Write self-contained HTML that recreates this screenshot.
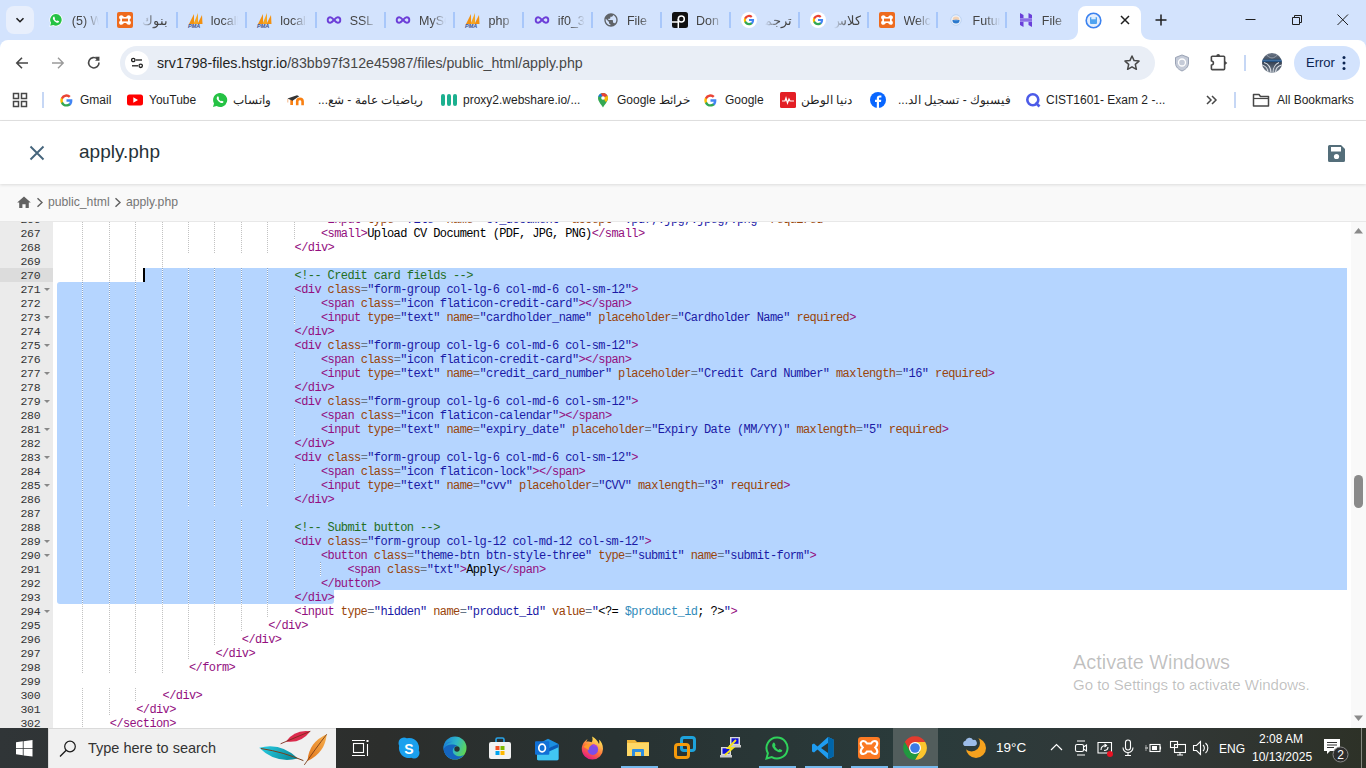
<!DOCTYPE html>
<html><head><meta charset="utf-8"><title>apply.php</title>
<style>
*{margin:0;padding:0;box-sizing:border-box}
html,body{width:1366px;height:768px;overflow:hidden;background:#fff;font-family:"Liberation Sans",sans-serif;position:relative}
.abs{position:absolute}
/* tab strip */
#tabs{position:absolute;left:0;top:0;width:1366px;height:50px;background:#d3e3fd}
#toolbar{position:absolute;left:0;top:40px;width:1366px;height:40px;background:#fff;border-radius:8px 8px 0 0}
#omni{position:absolute;left:120px;top:46px;width:1035px;height:34px;border-radius:17px;background:#e9eef6}
#bm{position:absolute;left:0;top:80px;width:1366px;height:40px;background:#fff}
#sep{position:absolute;left:0;top:120px;width:1366px;height:1px;background:#e3e3e3}
/* page */
#hdr{position:absolute;left:0;top:121px;width:1366px;height:63px;background:#fff;box-shadow:0 1px 3px rgba(0,0,0,.12);z-index:2}
#crumb{position:absolute;left:0;top:184px;width:1366px;height:38px;background:#f9f9f9;border-bottom:1px solid #e8e8e8}
#ed{position:absolute;left:0;top:222px;width:1366px;height:506px;background:#fff;overflow:hidden}
.gut{position:absolute;left:0;top:0;width:53px;height:100%;background:#ebebeb}
.gal{position:absolute;left:0;width:53px;height:14px;background:#dcdcdc}
.ln{position:absolute;left:0;width:40.3px;margin-top:0.6px;text-align:right;font:11.5px/14px "Liberation Mono",monospace;letter-spacing:-0.3px;color:#333}
.fw{position:absolute;left:44px;width:0;height:0;border-left:3px solid transparent;border-right:3px solid transparent;border-top:3px solid #888}
.sel{position:absolute;background:#b5d5ff}
.ig{position:absolute;width:1px;background:repeating-linear-gradient(to bottom,rgba(0,0,0,.24) 0 1px,#fff 1px 2px)}
.cl{position:absolute;margin-top:1px;white-space:pre;font:12px/14px "Liberation Mono",monospace;letter-spacing:-0.6px;color:#000}
.cur{position:absolute;width:2px;height:14px;background:#000}
#sb{position:absolute;left:1351px;top:222px;width:15px;height:506px;background:#f9f9f9}
#taskbar{position:absolute;left:0;top:728px;width:1366px;height:40px;background:linear-gradient(to right,#303537 0%,#2c2e2c 28%,#283232 45%,#2a3b3b 68%,#323838 84%,#2d3127 100%)}
#search{position:absolute;left:48px;top:728px;width:288px;height:40px;background:#f0f0f0;border-top:1px solid #dadada;border-left:1px solid #dadada}
.cont{position:absolute;left:53px;top:0;width:1294px;height:100%;overflow:hidden}
.ttl{position:absolute;top:13px;width:27px;height:16px;font-size:12.5px;line-height:16px;color:#444;white-space:nowrap;overflow:hidden;-webkit-mask-image:linear-gradient(to right,#000 45%,transparent 100%)}
.ttl.rtl{direction:rtl;text-align:right;-webkit-mask-image:linear-gradient(to left,#000 45%,transparent 100%)}
.tsep{position:absolute;top:12px;width:2px;height:16px;background:#a8c7fa}
.url{font-size:14.2px;line-height:18px;white-space:nowrap;letter-spacing:0}
.bmt{position:absolute;top:92px;font-size:12px;line-height:16px;color:#1f1f1f;white-space:nowrap}
.crumbt{position:absolute;top:193.5px;font-size:12.2px;line-height:16px;color:#757575;white-space:nowrap}
.tray{position:absolute;color:#fff;line-height:16px;white-space:nowrap}

</style></head><body>
<div id="tabs">
<div class="abs" style="left:6px;top:6px;width:28px;height:28px;border-radius:8px;background:#e8effc"></div>
<svg class="abs" style="left:14px;top:14px" width="12" height="12" viewBox="0 0 12 12"><path d="M2.5 4.2 L6 7.7 L9.5 4.2" fill="none" stroke="#1f1f1f" stroke-width="1.6"/></svg>
<div class="abs" style="left:48px;top:12px;width:18px;height:16px"><svg width="16" height="16" viewBox="0 0 16 16"><path d="M8 1.2a6.6 6.6 0 0 0-5.7 9.9L1.3 14.7l3.7-1A6.6 6.6 0 1 0 8 1.2z" fill="#fff"/><path d="M8 2a5.8 5.8 0 0 0-5 8.8l-.8 3 3.1-.8A5.8 5.8 0 1 0 8 2z" fill="#25c244"/><path d="M5.6 4.8c.3-.3.7-.2.8.1l.6 1.3c.1.3-.2.6-.4.8.4.9 1.2 1.7 2.2 2.1.2-.2.5-.6.8-.5l1.3.6c.3.1.3.5.1.8-.7.9-1.6.9-2.7.4A6.4 6.4 0 0 1 5.200 7.600c-.5-1.1-.4-2.100.4-2.800z" fill="#fff"/></svg></div>
<div class="ttl" style="left:71.8px">(5) WhatsApp</div>
<div class="tsep" style="left:106px"></div>
<div class="abs" style="left:117px;top:12px;width:18px;height:16px"><svg width="16" height="16" viewBox="0 0 16 16"><rect x="0" y="0" width="16" height="16" rx="2" fill="#ee6b1e"/><path d="M4.300 3.200c1.200 0 2 .8 2.500 1.700h2.400c.5-.9 1.300-1.700 2.500-1.700 1.400 0 2.200 1 2.200 2.100 0 1-.7 1.800-1.500 2.700.8.900 1.500 1.700 1.500 2.700 0 1.100-.8 2.100-2.200 2.100-1.200 0-2-.8-2.500-1.700H6.800c-.5.900-1.300 1.700-2.500 1.700-1.400 0-2.200-1-2.200-2.100 0-1 .7-1.800 1.500-2.700C2.800 7.100 2.100 6.300 2.100 5.300c0-1.100.8-2.100 2.200-2.100z" fill="#fff"/><path d="M5 6.600 H11 V9.400 H5z" fill="#ee6b1e"/></svg></div>
<div class="ttl rtl" style="left:141.3px">بنوك</div>
<div class="tsep" style="left:176px"></div>
<div class="abs" style="left:187px;top:12px;width:18px;height:16px"><svg width="18" height="16" viewBox="0 0 18 16"><path d="M2 12 L7 2 L7 12z" fill="#f29111"/><path d="M6.5 12 L11 1 L11 12z" fill="#f5a623"/><path d="M10.5 12 L15 3 L15.500 12z" fill="#f29111"/><text x="1" y="15.5" font-family="Liberation Sans" font-size="5.5" font-weight="bold" font-style="italic" fill="#3b4f8c">PMA</text></svg></div>
<div class="ttl" style="left:210.8px">localhost</div>
<div class="tsep" style="left:245px"></div>
<div class="abs" style="left:256px;top:12px;width:18px;height:16px"><svg width="18" height="16" viewBox="0 0 18 16"><path d="M2 12 L7 2 L7 12z" fill="#f29111"/><path d="M6.5 12 L11 1 L11 12z" fill="#f5a623"/><path d="M10.5 12 L15 3 L15.500 12z" fill="#f29111"/><text x="1" y="15.5" font-family="Liberation Sans" font-size="5.5" font-weight="bold" font-style="italic" fill="#3b4f8c">PMA</text></svg></div>
<div class="ttl" style="left:280.2px">localhost</div>
<div class="tsep" style="left:315px"></div>
<div class="abs" style="left:326px;top:12px;width:18px;height:16px"><svg width="16" height="16" viewBox="0 0 16 16"><path d="M4.300 5.200c-1.500 0-2.600 1.200-2.600 2.800s1.100 2.800 2.600 2.800c2.300 0 5.100-5.600 7.400-5.600 1.500 0 2.600 1.200 2.600 2.800s-1.100 2.800-2.600 2.800c-2.300 0-5.100-5.600-7.400-5.600z" fill="none" stroke="#6d3fd8" stroke-width="1.9"/></svg></div>
<div class="ttl" style="left:349.7px">SSL</div>
<div class="tsep" style="left:384px"></div>
<div class="abs" style="left:395px;top:12px;width:18px;height:16px"><svg width="16" height="16" viewBox="0 0 16 16"><path d="M4.300 5.200c-1.500 0-2.600 1.200-2.600 2.800s1.100 2.800 2.600 2.800c2.300 0 5.100-5.600 7.400-5.600 1.500 0 2.600 1.200 2.600 2.800s-1.100 2.800-2.600 2.800c-2.300 0-5.100-5.600-7.400-5.600z" fill="none" stroke="#6d3fd8" stroke-width="1.9"/></svg></div>
<div class="ttl" style="left:419.1px">MySQL</div>
<div class="tsep" style="left:453px"></div>
<div class="abs" style="left:464px;top:12px;width:18px;height:16px"><svg width="18" height="16" viewBox="0 0 18 16"><path d="M2 12 L7 2 L7 12z" fill="#f29111"/><path d="M6.5 12 L11 1 L11 12z" fill="#f5a623"/><path d="M10.5 12 L15 3 L15.500 12z" fill="#f29111"/><text x="1" y="15.5" font-family="Liberation Sans" font-size="5.5" font-weight="bold" font-style="italic" fill="#3b4f8c">PMA</text></svg></div>
<div class="ttl" style="left:488.6px">php</div>
<div class="tsep" style="left:522px"></div>
<div class="abs" style="left:534px;top:12px;width:18px;height:16px"><svg width="16" height="16" viewBox="0 0 16 16"><path d="M4.300 5.200c-1.500 0-2.600 1.200-2.600 2.800s1.100 2.800 2.600 2.800c2.300 0 5.100-5.600 7.400-5.600 1.500 0 2.600 1.200 2.600 2.800s-1.100 2.800-2.600 2.800c-2.300 0-5.100-5.600-7.400-5.600z" fill="none" stroke="#6d3fd8" stroke-width="1.9"/></svg></div>
<div class="ttl" style="left:557.7px">if0_39</div>
<div class="tsep" style="left:591px"></div>
<div class="abs" style="left:603px;top:12px;width:18px;height:16px"><svg width="16" height="16" viewBox="0 0 24 24"><path d="M12 2C6.480 2 2 6.480 2 12s4.480 10 10 10 10-4.480 10-10S17.520 2 12 2zm-1 17.930c-3.950-.490-7-3.850-7-7.930 0-.620.080-1.210.210-1.790L9 15v1c0 1.100.900 2 2 2v1.930zm6.900-2.540c-.260-.810-1-1.390-1.900-1.390h-1v-3c0-.550-.450-1-1-1H8v-2h2c.550 0 1-.450 1-1V7h2c1.100 0 2-.900 2-2v-.410c2.930 1.190 5 4.060 5 7.410 0 2.080-.800 3.970-2.100 5.390z" fill="#5f6368"/></svg></div>
<div class="ttl" style="left:626.9px">File</div>
<div class="tsep" style="left:660px"></div>
<div class="abs" style="left:672px;top:12px;width:18px;height:16px"><svg width="16" height="16" viewBox="0 0 16 16"><rect width="16" height="16" rx="2.500" fill="#111"/><circle cx="9.300" cy="7" r="3" fill="none" stroke="#fff" stroke-width="1.500"/><path d="M0 10 H6.300 M6.300 7 V16" stroke="#fff" stroke-width="1.500" fill="none"/></svg></div>
<div class="ttl" style="left:696.0px">Don</div>
<div class="tsep" style="left:729px"></div>
<div class="abs" style="left:741px;top:12px;width:18px;height:16px"><svg width="16" height="16" viewBox="0 0 16 16"><circle cx="8" cy="8" r="8" fill="#fff"/><path d="M13.100 8.100c0-.4 0-.8-.1-1.100H8v2.100h2.900a2.500 2.500 0 0 1-1.100 1.600v1.400h1.700c1-.9 1.600-2.300 1.600-4z" fill="#4285f4"/><path d="M8 13.200c1.400 0 2.600-.5 3.500-1.300l-1.700-1.400c-.5.300-1.100.500-1.800.500-1.400 0-2.500-.900-2.900-2.200H3.300v1.400A5.200 5.200 0 0 0 8 13.200z" fill="#34a853"/><path d="M5.100 8.800A3.100 3.100 0 0 1 5.100 7.200V5.800H3.300a5.200 5.200 0 0 0 0 4.600z" fill="#fbbc05"/><path d="M8 4.900c.8 0 1.500.3 2 .8l1.500-1.500A5.200 5.200 0 0 0 3.300 5.800l1.800 1.400C5.500 5.900 6.600 4.900 8 4.900z" fill="#ea4335"/></svg></div>
<div class="ttl rtl" style="left:765.1px">ترجمة</div>
<div class="tsep" style="left:798px"></div>
<div class="abs" style="left:810px;top:12px;width:18px;height:16px"><svg width="16" height="16" viewBox="0 0 16 16"><circle cx="8" cy="8" r="8" fill="#fff"/><path d="M13.100 8.100c0-.4 0-.8-.1-1.100H8v2.100h2.900a2.500 2.500 0 0 1-1.100 1.600v1.400h1.700c1-.9 1.600-2.300 1.600-4z" fill="#4285f4"/><path d="M8 13.200c1.400 0 2.600-.5 3.500-1.300l-1.700-1.400c-.5.300-1.100.500-1.800.500-1.400 0-2.500-.900-2.900-2.200H3.300v1.400A5.200 5.200 0 0 0 8 13.200z" fill="#34a853"/><path d="M5.100 8.800A3.100 3.100 0 0 1 5.100 7.200V5.800H3.300a5.200 5.200 0 0 0 0 4.600z" fill="#fbbc05"/><path d="M8 4.900c.8 0 1.500.3 2 .8l1.500-1.500A5.200 5.200 0 0 0 3.300 5.800l1.800 1.400C5.500 5.900 6.600 4.900 8 4.900z" fill="#ea4335"/></svg></div>
<div class="ttl rtl" style="left:834.3px">كلاس</div>
<div class="tsep" style="left:867px"></div>
<div class="abs" style="left:879px;top:12px;width:18px;height:16px"><svg width="16" height="16" viewBox="0 0 16 16"><rect x="0" y="0" width="16" height="16" rx="2" fill="#ee6b1e"/><path d="M4.300 3.200c1.200 0 2 .8 2.500 1.700h2.400c.5-.9 1.300-1.700 2.500-1.700 1.400 0 2.200 1 2.200 2.100 0 1-.7 1.800-1.500 2.700.8.900 1.500 1.700 1.500 2.700 0 1.100-.8 2.100-2.200 2.100-1.200 0-2-.8-2.500-1.700H6.800c-.5.900-1.300 1.700-2.500 1.700-1.400 0-2.200-1-2.200-2.100 0-1 .7-1.800 1.500-2.700C2.800 7.100 2.100 6.300 2.100 5.300c0-1.100.8-2.100 2.200-2.100z" fill="#fff"/><path d="M5 6.600 H11 V9.400 H5z" fill="#ee6b1e"/></svg></div>
<div class="ttl" style="left:903.5px">Welcome</div>
<div class="tsep" style="left:936px"></div>
<div class="abs" style="left:948px;top:12px;width:18px;height:16px"><svg width="16" height="16" viewBox="0 0 16 16"><circle cx="8" cy="8" r="5.300" fill="#e8effa" stroke="#b5cdee" stroke-width="0.800"/><circle cx="8" cy="8" r="3.600" fill="#fff"/><path d="M4.600 8 A3.400 3.400 0 0 1 11.400 8z" fill="#f3d2b5"/><path d="M4.400 8 A3.600 3.600 0 0 0 11.600 8z" fill="#2b78cc"/><path d="M5.400 8 Q8 6.900 10.600 8 Q8 9.100 5.400 8z" fill="#6aa8ea"/></svg></div>
<div class="ttl" style="left:972.6px">Future</div>
<div class="tsep" style="left:1005px"></div>
<div class="abs" style="left:1018px;top:12px;width:18px;height:16px"><svg width="16" height="16" viewBox="0 0 16 16"><path d="M2 1 L5.500 3 V6.300 L2 6.300z M2 9.700 L5.500 9.700 V15 L2 13z M10.500 1 L14 3 V6.300 L10.500 6.300z M10.500 9.700 L14 9.700 V15 L10.500 13z" fill="#6a3fd9"/><path d="M2 6.300 H14 L14 9.700 H2z" fill="#8c6fe6"/></svg></div>
<div class="ttl" style="left:1041.8px">File</div>
<svg class="abs" style="left:1068px;top:6px" width="84" height="34" viewBox="0 0 84 34"><path d="M0 34 C6 34 10 30 10 24 V8 A8 8 0 0 1 18 0 H65 A8 8 0 0 1 73 8 V24 C73 30 77 34 84 34 Z" fill="#fff"/></svg>
<svg class="abs" style="left:1085px;top:12px" width="17" height="17" viewBox="0 0 17 17"><circle cx="8.500" cy="8.500" r="7.300" fill="#e4eefc" stroke="#3b82f0" stroke-width="1.600"/><rect x="5" y="5" width="7" height="7" rx="1" fill="#4fa3f0"/><rect x="6.300" y="5" width="4.400" height="2.300" fill="#d9ecff"/></svg>
<svg class="abs" style="left:1120px;top:15px" width="10" height="10" viewBox="0 0 10 10"><path d="M1 1 L9 9 M9 1 L1 9" stroke="#1f1f1f" stroke-width="1.500"/></svg>
<svg class="abs" style="left:1155px;top:14px" width="12" height="12" viewBox="0 0 12 12"><path d="M6 0.500 V11.500 M0.500 6 H11.500" stroke="#1f1f1f" stroke-width="1.500"/></svg>
<svg class="abs" style="left:1245px;top:14px" width="12" height="12" viewBox="0 0 12 12"><path d="M0.500 5.500 H10.500" stroke="#1f1f1f" stroke-width="1"/></svg>
<svg class="abs" style="left:1291px;top:14px" width="12" height="12" viewBox="0 0 12 12"><path d="M1.500 3.500 H8.500 V10.500 H1.500 Z M3.500 3.500 V1.500 H10.500 V8.500 H8.500" fill="none" stroke="#1f1f1f" stroke-width="1"/></svg>
<svg class="abs" style="left:1337px;top:14px" width="12" height="12" viewBox="0 0 12 12"><path d="M0.500 0.500 L11 11 M11 0.500 L0.500 11" stroke="#1f1f1f" stroke-width="1"/></svg>
</div>
<div id="toolbar"></div>
<div id="omni"></div>
<svg class="abs" style="left:14px;top:55px" width="16" height="16" viewBox="0 0 16 16"><path d="M14 8 H3 M8 2.800 L2.800 8 L8 13.200" stroke="#474747" stroke-width="1.6" fill="none"/></svg>
<svg class="abs" style="left:50px;top:55px" width="16" height="16" viewBox="0 0 16 16"><path d="M2 8 H13 M8 2.800 L13.200 8 L8 13.200" stroke="#9a9a9a" stroke-width="1.4" fill="none"/></svg>
<svg class="abs" style="left:86px;top:55px" width="16" height="16" viewBox="0 0 16 16"><path d="M13 7.500 A5.200 5.200 0 1 1 11.300 3.900" stroke="#474747" stroke-width="1.6" fill="none"/><path d="M9.200 1.700 H13.200 V5.700" fill="#474747" stroke="none"/><path d="M13.300 1.500 V5.800 H9 Z" fill="#474747"/></svg>
<div class="abs" style="left:125px;top:51px;width:24px;height:24px;border-radius:12px;background:#fff"></div>
<svg class="abs" style="left:129px;top:55px" width="16" height="16" viewBox="0 0 16 16"><circle cx="4.300" cy="5" r="1.700" fill="none" stroke="#1f1f1f" stroke-width="1.300"/><path d="M7 5 H13" stroke="#1f1f1f" stroke-width="1.300"/><circle cx="11.700" cy="10.800" r="1.700" fill="none" stroke="#1f1f1f" stroke-width="1.300"/><path d="M3 10.800 H9" stroke="#1f1f1f" stroke-width="1.300"/></svg>
<div class="abs url" style="left:157px;top:54px"><span style="color:#1f1f1f">srv1798-files.hstgr.io</span><span style="color:#474747">/83bb97f312e45987/files/public_html/apply.php</span></div>
<svg class="abs" style="left:1123px;top:54px" width="18" height="18" viewBox="0 0 18 18"><path d="M9 2 L11.100 6.600 L16 7.100 L12.300 10.400 L13.400 15.300 L9 12.800 L4.600 15.300 L5.700 10.400 L2 7.100 L6.900 6.600 Z" fill="none" stroke="#474747" stroke-width="1.500" stroke-linejoin="round"/></svg>
<svg class="abs" style="left:1174px;top:54px" width="16" height="18" viewBox="0 0 16 18"><path d="M8 1 L14.500 3.500 V9 C14.500 13 11.500 15.500 8 17 C4.500 15.500 1.500 13 1.500 9 V3.500 Z" fill="#c5cbd8" stroke="#9aa3b5" stroke-width="1"/><circle cx="8" cy="8.500" r="3.500" fill="none" stroke="#fff" stroke-width="1.300"/></svg>
<svg class="abs" style="left:1209px;top:53px" width="20" height="19" viewBox="0 0 20 19"><path d="M3.300 3.200 H14.700 A0.900 0.900 0 0 1 15.600 4.100 V15.700 A0.900 0.900 0 0 1 14.700 16.600 H3.300 A0.900 0.900 0 0 1 2.400 15.700 V12 A2 2 0 0 0 2.400 8 V4.100 A0.900 0.900 0 0 1 3.300 3.200 Z" fill="none" stroke="#474747" stroke-width="1.600" stroke-linejoin="round"/><path d="M7.300 3 A1.900 1.900 0 0 1 11.100 3z" fill="#474747"/><path d="M15.500 7.800 L18.300 10 L15.500 12.200z" fill="#474747"/></svg>
<div class="abs" style="left:1244px;top:55px;width:2px;height:16px;background:#c6d7f5"></div>
<svg class="abs" style="left:1262px;top:53px" width="20" height="20" viewBox="0 0 20 20"><defs><clipPath id="avc"><circle cx="10" cy="10" r="10"/></clipPath><linearGradient id="avg" x1="0" y1="0" x2="0" y2="1"><stop offset="0" stop-color="#6d7888"/><stop offset="0.450" stop-color="#354152"/><stop offset="1" stop-color="#7a8592"/></linearGradient></defs><g clip-path="url(#avc)"><rect width="20" height="20" fill="url(#avg)"/><path d="M0 6.500 H20 V9 H0z" fill="#24507f"/><path d="M0 7.300 H20" stroke="#5f8fc4" stroke-width="0.600"/><path d="M9 20 C9 15 7 11 2 9.500 M11 20 C11 15 12 12 17 9.500 M13.500 20 C13.500 16 15 13 20 12 M6 20 C6 16 4 13 0 12" stroke="#d9dde3" stroke-width="1.100" fill="none"/><path d="M3 0 C5 3 8 5 10 5 M17 0 C15 3 12 5 10 5" stroke="#aab3bf" stroke-width="0.800" fill="none"/></g></svg>
<div class="abs" style="left:1294px;top:46px;width:66px;height:34px;border-radius:17px;background:#d3e3fd"></div>
<div class="abs" style="left:1306px;top:54px;font-size:13px;line-height:18px;color:#0b2452">Error</div>
<svg class="abs" style="left:1341px;top:55px" width="6" height="16" viewBox="0 0 6 16"><circle cx="3" cy="2.500" r="1.500" fill="#0b2452"/><circle cx="3" cy="8" r="1.500" fill="#0b2452"/><circle cx="3" cy="13.500" r="1.500" fill="#0b2452"/></svg>
<div id="bm"></div>
<svg class="abs" style="left:12px;top:92px" width="16" height="16" viewBox="0 0 16 16"><g fill="none" stroke="#474747" stroke-width="1.500"><rect x="1.500" y="1.500" width="5" height="5"/><rect x="9.500" y="1.500" width="5" height="5"/><rect x="1.500" y="9.500" width="5" height="5"/><rect x="9.500" y="9.500" width="5" height="5"/></g></svg>
<div class="abs" style="left:42px;top:92px;width:2px;height:16px;background:#c6d7f5"></div>
<div class="abs" style="left:60px;top:92px;height:16px"><svg width="13" height="13" style="margin-top:1.5px" viewBox="0 0 16 16"><path d="M15.200 8.200c0-.6 0-1.100-.1-1.600H8v3h4.100a3.500 3.500 0 0 1-1.500 2.300v1.900h2.400c1.400-1.300 2.200-3.200 2.200-5.600z" fill="#4285f4"/><path d="M8 15.500c2 0 3.700-.7 5-1.800l-2.400-1.900c-.7.500-1.600.8-2.600.8-2 0-3.700-1.300-4.300-3.200H1.200v1.900A7.500 7.500 0 0 0 8 15.500z" fill="#34a853"/><path d="M3.700 9.400a4.500 4.500 0 0 1 0-2.900V4.600H1.200a7.500 7.500 0 0 0 0 6.700z" fill="#fbbc05"/><path d="M8 3.500c1.100 0 2.100.4 2.900 1.100l2.200-2.200A7.500 7.500 0 0 0 1.200 4.600l2.500 1.900C4.300 4.800 6 3.500 8 3.500z" fill="#ea4335"/></svg></div>
<div class="abs bmt" style="left:80px">Gmail</div>
<div class="abs" style="left:127px;top:92px;height:16px"><svg width="16" height="16" viewBox="0 0 16 16"><rect x="0" y="2.500" width="16" height="11" rx="2.500" fill="#f00"/><path d="M6.300 5.300 L11 8 L6.300 10.700z" fill="#fff"/></svg></div>
<div class="abs bmt" style="left:149px">YouTube</div>
<div class="abs" style="left:212px;top:92px;height:16px"><svg width="16" height="16" viewBox="0 0 16 16"><path d="M8 1a7 7 0 0 0-6 10.500L1 15l3.600-1A7 7 0 1 0 8 1z" fill="#25c244"/><path d="M5.500 4.500c.3-.3.700-.2.800.1l.7 1.400c.1.300-.2.600-.4.900.5 1 1.300 1.800 2.400 2.300.2-.2.500-.6.900-.5l1.400.7c.3.100.3.500.1.800-.8 1-1.800 1-3 .5A7 7 0 0 1 5 7.600c-.5-1.200-.4-2.300.5-3.100z" fill="#fff"/></svg></div>
<div class="abs bmt" dir="rtl" style="left:233px">واتساب</div>
<div class="abs" style="left:286px;top:92px;height:16px"><svg width="18" height="16" viewBox="0 0 18 16"><rect x="4.300" y="8" width="2.700" height="5" fill="#f98012"/><path d="M11.200 13.200 V9.600 A2.700 2.700 0 0 1 16.600 9.600 V13.200" fill="none" stroke="#f98012" stroke-width="2.600"/><path d="M1.500 6.500 L11 3.200 L13.200 4.300 L6.500 8.800z" fill="#333"/><path d="M1.800 7 V10.500" stroke="#f7b98a" stroke-width="1"/></svg></div>
<div class="abs bmt" dir="rtl" style="left:318px">رياضيات عامة - شع...</div>
<div class="abs" style="left:440px;top:92px;height:16px"><svg width="18" height="16" viewBox="0 0 18 16"><rect x="1" y="2" width="4" height="12" rx="2" fill="#1cb08f"/><rect x="7" y="2" width="4" height="12" rx="2" fill="#1cb08f"/><rect x="13" y="2" width="4" height="12" rx="2" fill="#1cb08f"/></svg></div>
<div class="abs bmt" style="left:463px">proxy2.webshare.io/...</div>
<div class="abs" style="left:597px;top:92px;height:16px"><svg width="12" height="16" viewBox="0 0 12 16"><path d="M6 15.500 C4 12 1 9.500 1 6 A5 5 0 0 1 11 6 C11 9.500 8 12 6 15.500z" fill="#34a853"/><path d="M1.200 4.800 A5 5 0 0 1 4 1.400 L6.500 4.200 Z" fill="#1a73e8"/><path d="M4 1.400 A5 5 0 0 1 10.500 3.800 L6 6 Z" fill="#ea4335"/><path d="M10.500 3.800 A5 5 0 0 1 11 6 C11 7.500 10 9 9 10.300 L6 6z" fill="#fbbc04"/><circle cx="6" cy="6" r="1.800" fill="#fff"/></svg></div>
<div class="abs bmt" dir="rtl" style="left:617px">خرائط Google</div>
<div class="abs" style="left:704px;top:92px;height:16px"><svg width="13" height="13" style="margin-top:1.5px" viewBox="0 0 16 16"><path d="M15.200 8.200c0-.6 0-1.100-.1-1.600H8v3h4.100a3.500 3.500 0 0 1-1.500 2.300v1.900h2.400c1.400-1.300 2.200-3.200 2.200-5.600z" fill="#4285f4"/><path d="M8 15.500c2 0 3.700-.7 5-1.800l-2.400-1.900c-.7.500-1.600.8-2.600.8-2 0-3.700-1.300-4.300-3.200H1.200v1.900A7.500 7.500 0 0 0 8 15.500z" fill="#34a853"/><path d="M3.700 9.400a4.500 4.500 0 0 1 0-2.900V4.600H1.200a7.500 7.500 0 0 0 0 6.700z" fill="#fbbc05"/><path d="M8 3.500c1.100 0 2.100.4 2.900 1.100l2.200-2.200A7.500 7.500 0 0 0 1.200 4.600l2.500 1.900C4.300 4.800 6 3.500 8 3.500z" fill="#ea4335"/></svg></div>
<div class="abs bmt" style="left:725px">Google</div>
<div class="abs" style="left:780px;top:92px;height:16px"><svg width="16" height="16" viewBox="0 0 16 16"><rect x="0" y="0" width="16" height="16" rx="1.500" fill="#e31e25"/><path d="M2 9 H5 L6 6 L7.500 11 L9 7 L10 9 H14" fill="none" stroke="#fff" stroke-width="1.200"/></svg></div>
<div class="abs bmt" dir="rtl" style="left:801px">دنيا الوطن</div>
<div class="abs" style="left:870px;top:92px;height:16px"><svg width="16" height="16" viewBox="0 0 16 16"><circle cx="8" cy="8" r="8" fill="#0866ff"/><path d="M9 16 V10 H11 L11.300 7.800 H9 V6.500 C9 5.900 9.300 5.500 10.100 5.500 H11.400 V3.600 C11 3.500 10.300 3.500 9.700 3.500 C8 3.500 6.800 4.500 6.800 6.300 V7.800 H5 V10 H6.800 V16z" fill="#fff"/></svg></div>
<div class="abs bmt" dir="rtl" style="left:898px">فيسبوك - تسجيل الد...</div>
<div class="abs" style="left:1025px;top:92px;height:16px"><svg width="16" height="16" viewBox="0 0 16 16"><circle cx="7.800" cy="7.800" r="5.500" fill="none" stroke="#4c5be8" stroke-width="2.600"/><path d="M10.500 10.500 L14.500 14.500" stroke="#4c5be8" stroke-width="2.600"/></svg></div>
<div class="abs bmt" style="left:1046px">CIST1601- Exam 2 -...</div>
<div class="abs" style="left:1252px;top:92px;height:16px"><svg width="18" height="16" viewBox="0 0 18 16"><path d="M1.500 2.500 H7 L8.500 4.500 H16.500 V14 H1.500 Z" fill="none" stroke="#474747" stroke-width="1.500" stroke-linejoin="round"/><path d="M1.500 6.500 H16.500" stroke="#474747" stroke-width="1.200"/></svg></div>
<div class="abs bmt" style="left:1277px">All Bookmarks</div>
<svg class="abs" style="left:1205px;top:94px" width="13" height="12" viewBox="0 0 13 12"><path d="M2 2 L6 6 L2 10 M7 2 L11 6 L7 10" fill="none" stroke="#474747" stroke-width="1.500"/></svg>
<div class="abs" style="left:1234px;top:92px;width:2px;height:16px;background:#c6d7f5"></div>
<div id="ed">
<div class="gut">
<div class="gal" style="top:46px"></div>
<div class="ln" style="top:-10px">266</div>
<div class="ln" style="top:4px">267</div>
<div class="ln" style="top:18px">268</div>
<div class="ln" style="top:32px">269</div>
<div class="ln" style="top:46px">270</div>
<div class="ln" style="top:60px">271</div>
<div class="fw" style="top:66px"></div>
<div class="ln" style="top:74px">272</div>
<div class="ln" style="top:88px">273</div>
<div class="fw" style="top:94px"></div>
<div class="ln" style="top:102px">274</div>
<div class="ln" style="top:116px">275</div>
<div class="fw" style="top:122px"></div>
<div class="ln" style="top:130px">276</div>
<div class="ln" style="top:144px">277</div>
<div class="fw" style="top:150px"></div>
<div class="ln" style="top:158px">278</div>
<div class="ln" style="top:172px">279</div>
<div class="fw" style="top:178px"></div>
<div class="ln" style="top:186px">280</div>
<div class="ln" style="top:200px">281</div>
<div class="fw" style="top:206px"></div>
<div class="ln" style="top:214px">282</div>
<div class="ln" style="top:228px">283</div>
<div class="fw" style="top:234px"></div>
<div class="ln" style="top:242px">284</div>
<div class="ln" style="top:256px">285</div>
<div class="fw" style="top:262px"></div>
<div class="ln" style="top:270px">286</div>
<div class="ln" style="top:284px">287</div>
<div class="ln" style="top:298px">288</div>
<div class="ln" style="top:312px">289</div>
<div class="fw" style="top:318px"></div>
<div class="ln" style="top:326px">290</div>
<div class="fw" style="top:332px"></div>
<div class="ln" style="top:340px">291</div>
<div class="ln" style="top:354px">292</div>
<div class="ln" style="top:368px">293</div>
<div class="ln" style="top:382px">294</div>
<div class="fw" style="top:388px"></div>
<div class="ln" style="top:396px">295</div>
<div class="ln" style="top:410px">296</div>
<div class="ln" style="top:424px">297</div>
<div class="ln" style="top:438px">298</div>
<div class="ln" style="top:452px">299</div>
<div class="ln" style="top:466px">300</div>
<div class="ln" style="top:480px">301</div>
<div class="ln" style="top:494px">302</div>
</div>
<div class="cont">
<div class="sel" style="left:89.8px;top:46px;right:0;height:14px;border-radius:3px 0 0 0"></div>
<div class="sel" style="left:4px;top:60px;right:0;height:308px;border-radius:3px 0 0 0"></div>
<div class="sel" style="left:4px;top:368px;width:277.2px;height:14px;border-radius:0 0 3px 3px"></div>
<div class="ig" style="left:29.0px;top:-10px;height:462px"></div>
<div class="ig" style="left:29.0px;top:466px;height:42px"></div>
<div class="ig" style="left:56.0px;top:-10px;height:462px"></div>
<div class="ig" style="left:56.0px;top:466px;height:28px"></div>
<div class="ig" style="left:82.0px;top:-10px;height:462px"></div>
<div class="ig" style="left:82.0px;top:466px;height:14px"></div>
<div class="ig" style="left:109.0px;top:-10px;height:462px"></div>
<div class="ig" style="left:135.0px;top:-10px;height:42px"></div>
<div class="ig" style="left:135.0px;top:46px;height:238px"></div>
<div class="ig" style="left:135.0px;top:298px;height:140px"></div>
<div class="ig" style="left:161.0px;top:-10px;height:42px"></div>
<div class="ig" style="left:161.0px;top:46px;height:238px"></div>
<div class="ig" style="left:161.0px;top:298px;height:126px"></div>
<div class="ig" style="left:188.0px;top:-10px;height:42px"></div>
<div class="ig" style="left:188.0px;top:46px;height:238px"></div>
<div class="ig" style="left:188.0px;top:298px;height:112px"></div>
<div class="ig" style="left:214.0px;top:-10px;height:42px"></div>
<div class="ig" style="left:214.0px;top:46px;height:238px"></div>
<div class="ig" style="left:214.0px;top:298px;height:98px"></div>
<div class="ig" style="left:241.0px;top:-10px;height:28px"></div>
<div class="ig" style="left:241.0px;top:74px;height:28px"></div>
<div class="ig" style="left:241.0px;top:130px;height:28px"></div>
<div class="ig" style="left:241.0px;top:186px;height:28px"></div>
<div class="ig" style="left:241.0px;top:242px;height:28px"></div>
<div class="ig" style="left:241.0px;top:326px;height:42px"></div>
<div class="ig" style="left:267.0px;top:340px;height:14px"></div>
<div class="cl" style="top:-10px;left:268.0px"><span style="color:#930f80">&lt;input</span> <span style="color:#994409">type</span><span style="color:#687687">=</span><span style="color:#1a1aa6">"file"</span> <span style="color:#994409">name</span><span style="color:#687687">=</span><span style="color:#1a1aa6">"cv_document"</span> <span style="color:#994409">accept</span><span style="color:#687687">=</span><span style="color:#1a1aa6">".pdf,.jpg,.jpeg,.png"</span> <span style="color:#994409">required</span><span style="color:#930f80">&gt;</span></div>
<div class="cl" style="top:4px;left:268.0px"><span style="color:#930f80">&lt;small</span><span style="color:#930f80">&gt;</span>Upload CV Document (PDF, JPG, PNG)<span style="color:#930f80">&lt;/small</span><span style="color:#930f80">&gt;</span></div>
<div class="cl" style="top:18px;left:241.6px"><span style="color:#930f80">&lt;/div</span><span style="color:#930f80">&gt;</span></div>
<div class="cl" style="top:32px;left:109.6px"></div>
<div class="cl" style="top:46px;left:241.6px"><span style="color:#236e24">&lt;!-- Credit card fields --&gt;</span></div>
<div class="cl" style="top:60px;left:241.6px"><span style="color:#930f80">&lt;div</span> <span style="color:#994409">class</span><span style="color:#687687">=</span><span style="color:#1a1aa6">"form-group col-lg-6 col-md-6 col-sm-12"</span><span style="color:#930f80">&gt;</span></div>
<div class="cl" style="top:74px;left:268.0px"><span style="color:#930f80">&lt;span</span> <span style="color:#994409">class</span><span style="color:#687687">=</span><span style="color:#1a1aa6">"icon flaticon-credit-card"</span><span style="color:#930f80">&gt;</span><span style="color:#930f80">&lt;/span</span><span style="color:#930f80">&gt;</span></div>
<div class="cl" style="top:88px;left:268.0px"><span style="color:#930f80">&lt;input</span> <span style="color:#994409">type</span><span style="color:#687687">=</span><span style="color:#1a1aa6">"text"</span> <span style="color:#994409">name</span><span style="color:#687687">=</span><span style="color:#1a1aa6">"cardholder_name"</span> <span style="color:#994409">placeholder</span><span style="color:#687687">=</span><span style="color:#1a1aa6">"Cardholder Name"</span> <span style="color:#994409">required</span><span style="color:#930f80">&gt;</span></div>
<div class="cl" style="top:102px;left:241.6px"><span style="color:#930f80">&lt;/div</span><span style="color:#930f80">&gt;</span></div>
<div class="cl" style="top:116px;left:241.6px"><span style="color:#930f80">&lt;div</span> <span style="color:#994409">class</span><span style="color:#687687">=</span><span style="color:#1a1aa6">"form-group col-lg-6 col-md-6 col-sm-12"</span><span style="color:#930f80">&gt;</span></div>
<div class="cl" style="top:130px;left:268.0px"><span style="color:#930f80">&lt;span</span> <span style="color:#994409">class</span><span style="color:#687687">=</span><span style="color:#1a1aa6">"icon flaticon-credit-card"</span><span style="color:#930f80">&gt;</span><span style="color:#930f80">&lt;/span</span><span style="color:#930f80">&gt;</span></div>
<div class="cl" style="top:144px;left:268.0px"><span style="color:#930f80">&lt;input</span> <span style="color:#994409">type</span><span style="color:#687687">=</span><span style="color:#1a1aa6">"text"</span> <span style="color:#994409">name</span><span style="color:#687687">=</span><span style="color:#1a1aa6">"credit_card_number"</span> <span style="color:#994409">placeholder</span><span style="color:#687687">=</span><span style="color:#1a1aa6">"Credit Card Number"</span> <span style="color:#994409">maxlength</span><span style="color:#687687">=</span><span style="color:#1a1aa6">"16"</span> <span style="color:#994409">required</span><span style="color:#930f80">&gt;</span></div>
<div class="cl" style="top:158px;left:241.6px"><span style="color:#930f80">&lt;/div</span><span style="color:#930f80">&gt;</span></div>
<div class="cl" style="top:172px;left:241.6px"><span style="color:#930f80">&lt;div</span> <span style="color:#994409">class</span><span style="color:#687687">=</span><span style="color:#1a1aa6">"form-group col-lg-6 col-md-6 col-sm-12"</span><span style="color:#930f80">&gt;</span></div>
<div class="cl" style="top:186px;left:268.0px"><span style="color:#930f80">&lt;span</span> <span style="color:#994409">class</span><span style="color:#687687">=</span><span style="color:#1a1aa6">"icon flaticon-calendar"</span><span style="color:#930f80">&gt;</span><span style="color:#930f80">&lt;/span</span><span style="color:#930f80">&gt;</span></div>
<div class="cl" style="top:200px;left:268.0px"><span style="color:#930f80">&lt;input</span> <span style="color:#994409">type</span><span style="color:#687687">=</span><span style="color:#1a1aa6">"text"</span> <span style="color:#994409">name</span><span style="color:#687687">=</span><span style="color:#1a1aa6">"expiry_date"</span> <span style="color:#994409">placeholder</span><span style="color:#687687">=</span><span style="color:#1a1aa6">"Expiry Date (MM/YY)"</span> <span style="color:#994409">maxlength</span><span style="color:#687687">=</span><span style="color:#1a1aa6">"5"</span> <span style="color:#994409">required</span><span style="color:#930f80">&gt;</span></div>
<div class="cl" style="top:214px;left:241.6px"><span style="color:#930f80">&lt;/div</span><span style="color:#930f80">&gt;</span></div>
<div class="cl" style="top:228px;left:241.6px"><span style="color:#930f80">&lt;div</span> <span style="color:#994409">class</span><span style="color:#687687">=</span><span style="color:#1a1aa6">"form-group col-lg-6 col-md-6 col-sm-12"</span><span style="color:#930f80">&gt;</span></div>
<div class="cl" style="top:242px;left:268.0px"><span style="color:#930f80">&lt;span</span> <span style="color:#994409">class</span><span style="color:#687687">=</span><span style="color:#1a1aa6">"icon flaticon-lock"</span><span style="color:#930f80">&gt;</span><span style="color:#930f80">&lt;/span</span><span style="color:#930f80">&gt;</span></div>
<div class="cl" style="top:256px;left:268.0px"><span style="color:#930f80">&lt;input</span> <span style="color:#994409">type</span><span style="color:#687687">=</span><span style="color:#1a1aa6">"text"</span> <span style="color:#994409">name</span><span style="color:#687687">=</span><span style="color:#1a1aa6">"cvv"</span> <span style="color:#994409">placeholder</span><span style="color:#687687">=</span><span style="color:#1a1aa6">"CVV"</span> <span style="color:#994409">maxlength</span><span style="color:#687687">=</span><span style="color:#1a1aa6">"3"</span> <span style="color:#994409">required</span><span style="color:#930f80">&gt;</span></div>
<div class="cl" style="top:270px;left:241.6px"><span style="color:#930f80">&lt;/div</span><span style="color:#930f80">&gt;</span></div>
<div class="cl" style="top:284px;left:109.6px"></div>
<div class="cl" style="top:298px;left:241.6px"><span style="color:#236e24">&lt;!-- Submit button --&gt;</span></div>
<div class="cl" style="top:312px;left:241.6px"><span style="color:#930f80">&lt;div</span> <span style="color:#994409">class</span><span style="color:#687687">=</span><span style="color:#1a1aa6">"form-group col-lg-12 col-md-12 col-sm-12"</span><span style="color:#930f80">&gt;</span></div>
<div class="cl" style="top:326px;left:268.0px"><span style="color:#930f80">&lt;button</span> <span style="color:#994409">class</span><span style="color:#687687">=</span><span style="color:#1a1aa6">"theme-btn btn-style-three"</span> <span style="color:#994409">type</span><span style="color:#687687">=</span><span style="color:#1a1aa6">"submit"</span> <span style="color:#994409">name</span><span style="color:#687687">=</span><span style="color:#1a1aa6">"submit-form"</span><span style="color:#930f80">&gt;</span></div>
<div class="cl" style="top:340px;left:294.4px"><span style="color:#930f80">&lt;span</span> <span style="color:#994409">class</span><span style="color:#687687">=</span><span style="color:#1a1aa6">"txt"</span><span style="color:#930f80">&gt;</span>Apply<span style="color:#930f80">&lt;/span</span><span style="color:#930f80">&gt;</span></div>
<div class="cl" style="top:354px;left:268.0px"><span style="color:#930f80">&lt;/button</span><span style="color:#930f80">&gt;</span></div>
<div class="cl" style="top:368px;left:241.6px"><span style="color:#930f80">&lt;/div</span><span style="color:#930f80">&gt;</span></div>
<div class="cl" style="top:382px;left:241.6px"><span style="color:#930f80">&lt;input</span> <span style="color:#994409">type</span><span style="color:#687687">=</span><span style="color:#1a1aa6">"hidden"</span> <span style="color:#994409">name</span><span style="color:#687687">=</span><span style="color:#1a1aa6">"product_id"</span> <span style="color:#994409">value</span><span style="color:#687687">=</span><span style="color:#1a1aa6">"</span>&lt;?= <span style="color:#318bba">$product_id</span>; ?&gt;<span style="color:#1a1aa6">"</span><span style="color:#930f80">&gt;</span></div>
<div class="cl" style="top:396px;left:215.2px"><span style="color:#930f80">&lt;/div</span><span style="color:#930f80">&gt;</span></div>
<div class="cl" style="top:410px;left:188.8px"><span style="color:#930f80">&lt;/div</span><span style="color:#930f80">&gt;</span></div>
<div class="cl" style="top:424px;left:162.4px"><span style="color:#930f80">&lt;/div</span><span style="color:#930f80">&gt;</span></div>
<div class="cl" style="top:438px;left:136.0px"><span style="color:#930f80">&lt;/form</span><span style="color:#930f80">&gt;</span></div>
<div class="cl" style="top:452px;left:4.0px"></div>
<div class="cl" style="top:466px;left:109.6px"><span style="color:#930f80">&lt;/div</span><span style="color:#930f80">&gt;</span></div>
<div class="cl" style="top:480px;left:83.2px"><span style="color:#930f80">&lt;/div</span><span style="color:#930f80">&gt;</span></div>
<div class="cl" style="top:494px;left:56.8px"><span style="color:#930f80">&lt;/section</span><span style="color:#930f80">&gt;</span></div>
<div class="cur" style="left:89.8px;top:46px"></div>
</div>
</div>
<div id="sep"></div>
<div id="hdr"></div>
<svg class="abs" style="left:29px;top:145px;z-index:3" width="16" height="16" viewBox="0 0 16 16"><path d="M1.500 1.500 L14.500 14.500 M14.500 1.500 L1.500 14.500" stroke="#46657c" stroke-width="1.900"/></svg>
<div class="abs" style="left:79px;top:140px;font-size:19px;line-height:24px;color:#263238;z-index:3">apply.php</div>
<svg class="abs" style="left:1327px;top:144px;z-index:3" width="19" height="19" viewBox="0 0 19 19"><path d="M1 2.500 A1.500 1.500 0 0 1 2.500 1 H14 L18 5 V16.500 A1.500 1.500 0 0 1 16.500 18 H2.500 A1.500 1.500 0 0 1 1 16.500 Z" fill="#546e7a"/><rect x="4" y="3" width="10" height="4.500" fill="#fff"/><circle cx="9.500" cy="12.500" r="2.600" fill="#fff"/></svg>
<div id="crumb"></div>
<svg class="abs" style="left:17px;top:196px" width="14" height="12" viewBox="0 0 14 12"><path d="M7 0.500 L13.800 6.500 H11.800 V12 H8.600 V8.200 H5.400 V12 H2.200 V6.500 H0.200 Z" fill="#616161"/></svg>
<svg class="abs" style="left:36px;top:197px" width="8" height="11" viewBox="0 0 8 11"><path d="M1.500 1.200 L6 5.500 L1.500 9.800" fill="none" stroke="#616161" stroke-width="1.400"/></svg>
<div class="abs crumbt" style="left:48px">public_html</div>
<svg class="abs" style="left:114px;top:197px" width="8" height="11" viewBox="0 0 8 11"><path d="M1.500 1.200 L6 5.500 L1.500 9.800" fill="none" stroke="#616161" stroke-width="1.400"/></svg>
<div class="abs crumbt" style="left:126px">apply.php</div>
<div id="sb"></div>
<svg class="abs" style="left:1353px;top:227px" width="11" height="7" viewBox="0 0 11 7"><path d="M1 6.500 L5.500 1 L10 6.500z" fill="#8a8a8a"/></svg>
<svg class="abs" style="left:1353px;top:715px" width="11" height="7" viewBox="0 0 11 7"><path d="M1 0.500 L5.500 6 L10 0.500z" fill="#8a8a8a"/></svg>
<div class="abs" style="left:1354px;top:475px;width:9px;height:33px;border-radius:4.500px;background:#8a8a8a"></div>
<div class="abs" style="left:1073px;top:650px;font-size:19.9px;line-height:24px;color:rgba(0,0,0,.25);white-space:nowrap">Activate Windows</div>
<div class="abs" style="left:1073px;top:676px;font-size:15px;line-height:18px;color:rgba(0,0,0,.25);white-space:nowrap">Go to Settings to activate Windows.</div>
<div id="taskbar"></div>
<svg class="abs" style="left:16px;top:740px" width="17" height="17" viewBox="0 0 17 17"><path d="M0 2.300 L6.800 1.300 V7.900 H0z M7.600 1.200 L16.500 0 V7.900 H7.600z M0 8.700 H6.800 V15.300 L0 14.300z M7.600 8.700 H16.500 V16.600 L7.600 15.400z" fill="#fff"/></svg>
<div id="search"></div>
<svg class="abs" style="left:59px;top:740px" width="18" height="17" viewBox="0 0 18 17"><circle cx="11" cy="6.500" r="5.300" fill="none" stroke="#1a1a1a" stroke-width="1.200"/><path d="M7.200 10.300 L1 16.500" stroke="#1a1a1a" stroke-width="1.300"/></svg>
<div class="abs" style="left:88px;top:739px;font-size:14.5px;line-height:19px;color:#333;white-space:nowrap">Type here to search</div>
<svg class="abs" style="left:257px;top:729px" width="74" height="38" viewBox="0 0 74 38">
<defs><linearGradient id="ft" x1="0" y1="0" x2="1" y2="0.300"><stop offset="0" stop-color="#2ad0e6"/><stop offset="1" stop-color="#0b8d9e"/></linearGradient>
<linearGradient id="fo" x1="1" y1="0" x2="0" y2="1"><stop offset="0" stop-color="#f7b04e"/><stop offset="1" stop-color="#e2761c"/></linearGradient></defs>
<path d="M29 12.500 Q37.900 0 53.300 2.300 Q44.100 14.800 29 12.500Z" fill="#db2a4c"/>
<path d="M23.600 14.800 L29 12.500 L53.300 2.300" stroke="#7a2e1e" stroke-width="0.900" fill="none"/>
<path d="M2.200 18.800 Q23.800 13 41 29.500 Q18.400 35 2.200 18.800Z" fill="url(#ft)"/>
<path d="M4 19.500 C20 22 33 26 46.400 31.600" stroke="#7a3e1a" stroke-width="1" fill="none"/>
<path d="M69.700 5.300 Q68 24 50.500 32 Q51.600 13.300 69.700 5.300Z" fill="url(#fo)"/>
<path d="M69.700 5.300 C62 15 55 25 47.300 35.900" stroke="#7a3e1a" stroke-width="0.900" fill="none"/>
</svg>
<svg class="abs" style="left:351px;top:739px" width="20" height="18" viewBox="0 0 20 18"><g fill="none" stroke="#fff" stroke-width="1.100"><rect x="2.500" y="4.500" width="10" height="9"/><path d="M1 1.500 H14 M1 16.500 H14"/></g><rect x="15.500" y="1" width="2" height="2" fill="#fff"/><path d="M16.500 5 V17" stroke="#fff" stroke-width="1.100"/></svg>
<div class="abs" style="left:893px;top:728px;width:45px;height:40px;background:#525d5c"></div>
<div class="abs" style="left:397px;top:736px;width:24px;height:24px"><svg width="24" height="24" viewBox="0 0 24 24"><path d="M7 1.500 A5.500 5.500 0 0 0 1.500 7 C1.500 8 1.800 9 2.200 9.800 A10 10 0 0 0 14.200 21.800 C15 22.200 16 22.500 17 22.500 A5.500 5.500 0 0 0 22.500 17 C22.500 16 22.200 15 21.800 14.200 A10 10 0 0 0 9.800 2.200 C9 1.800 8 1.500 7 1.500z" fill="#1aa0ee"/><text x="12" y="17.500" text-anchor="middle" font-family="Liberation Sans" font-weight="bold" font-size="14" fill="#fff">S</text></svg></div>
<div class="abs" style="left:443px;top:736px;width:24px;height:24px"><svg width="24" height="24" viewBox="0 0 24 24"><defs><linearGradient id="eg" x1="0" y1="0.2" x2="1" y2="0.6"><stop offset="0" stop-color="#1b86d6"/><stop offset="0.5" stop-color="#2fb6c8"/><stop offset="1" stop-color="#62d84e"/></linearGradient></defs><circle cx="12" cy="12" r="11.500" fill="url(#eg)"/><path d="M0.500 12.500 A11.500 11.500 0 0 0 21.500 18.500 C19.500 20 16.500 20.800 14 20 C10.500 18.800 8.800 15.500 10.300 12.500 C11.300 10.500 13.300 9.800 14.500 9.800 C10 7.500 3.500 8 0.500 12.500z" fill="#1565c0"/><path d="M0.600 11 C1.500 7.500 5 5.500 9.500 5.800 C5.500 6.500 2 9 0.600 13z" fill="#1f7fd8"/><circle cx="14" cy="13" r="2.700" fill="#283232"/></svg></div>
<div class="abs" style="left:488px;top:736px;width:24px;height:24px"><svg width="24" height="24" viewBox="0 0 24 24"><path d="M8 6 V3.500 A1.500 1.500 0 0 1 9.500 2 H14.500 A1.500 1.500 0 0 1 16 3.500 V6" fill="none" stroke="#29a3e8" stroke-width="1.600"/><rect x="1" y="6" width="22" height="17" rx="2" fill="#f2f2f2"/><rect x="7.500" y="10" width="4" height="4" fill="#f25022"/><rect x="12.500" y="10" width="4" height="4" fill="#7fba00"/><rect x="7.500" y="15" width="4" height="4" fill="#00a4ef"/><rect x="12.500" y="15" width="4" height="4" fill="#ffb900"/></svg></div>
<div class="abs" style="left:534px;top:736px;width:24px;height:24px"><svg width="24" height="24" viewBox="0 0 24 24" style="overflow:visible"><path d="M3 8.500 L14 2.800 L24.500 8 V22.800 A1.500 1.500 0 0 1 23 24.300 H4.500 A1.500 1.500 0 0 1 3 22.800z" fill="#1c8fe0"/><path d="M3 15 L24.500 9 V22.800 A1.500 1.500 0 0 1 23 24.300 H4.500 A1.500 1.500 0 0 1 3 22.800z" fill="#41c6f3"/><path d="M12 13 L24.500 8 V11.200 L14 16z" fill="#0b5cb8"/><rect x="1" y="5.200" width="14.300" height="13.500" rx="1" fill="#1170d6"/><ellipse cx="8.100" cy="12" rx="3.300" ry="3.800" fill="none" stroke="#fff" stroke-width="1.700"/></svg></div>
<div class="abs" style="left:580px;top:736px;width:24px;height:24px"><svg width="24" height="24" viewBox="0 0 24 24" style="overflow:visible"><defs><linearGradient id="ffg" x1="0.850" y1="0" x2="0.300" y2="1"><stop offset="0" stop-color="#fff44f"/><stop offset="0.300" stop-color="#ffbd4f"/><stop offset="0.600" stop-color="#ff7139"/><stop offset="1" stop-color="#e31587"/></linearGradient></defs><path d="M1.800 13 A10.600 10.600 0 0 0 23 13 C23 8.500 21.200 5.300 18.800 3.500 C19.500 5.300 19.500 7 19 8 C17.500 4.500 15 1.800 12 0.500 C13 3 12.500 5.200 11.600 6.200 C10 5.400 8 5.200 6.200 5.700 C6.600 4.800 7 4.200 7.600 3.300 C4.800 4.500 1.800 8.500 1.800 13z" fill="url(#ffg)"/><circle cx="12.800" cy="13.600" r="5.300" fill="#7d4de8"/><path d="M12.800 8.300 A5.300 5.300 0 0 1 18 12.500 C16.500 10.500 14.500 10 12.800 10.500z" fill="#b043d8"/><path d="M3.500 11 C5.500 8 9.500 7.300 13 8.600 C10.300 9.300 8.700 11.300 8.600 14.200 C7 12.600 5 11.800 3.500 11z" fill="#ff9b2a"/></svg></div>
<div class="abs" style="left:626px;top:736px;width:24px;height:24px"><svg width="24" height="24" viewBox="0 0 24 24"><path d="M1 4 H9 L11 6 H23 V20 H1z" fill="#f0b73a"/><rect x="1" y="7" width="22" height="13" fill="#ffd866"/><path d="M6 20 V14 A1 1 0 0 1 7 13 H17 A1 1 0 0 1 18 14 V20 H15 V16 H9 V20z" fill="#2f8ee0"/></svg></div>
<div class="abs" style="left:673px;top:736px;width:24px;height:24px"><svg width="24" height="24" viewBox="0 0 24 24"><rect x="8.500" y="1.500" width="13" height="13" rx="2.500" fill="none" stroke="#1ea3dc" stroke-width="3"/><rect x="2.500" y="8.500" width="13" height="13" rx="2.500" fill="none" stroke="#f59a0c" stroke-width="3"/></svg></div>
<div class="abs" style="left:719px;top:736px;width:24px;height:24px"><svg width="24" height="24" viewBox="0 0 24 24"><rect x="11" y="1" width="10" height="8" fill="#d8d8d8"/><rect x="12.500" y="2.300" width="7" height="5.500" fill="#1010d8"/><rect x="10" y="9" width="12" height="2.500" fill="#c8c8c8"/><rect x="2" y="11" width="10" height="8" fill="#d8d8d8"/><rect x="3.500" y="12.300" width="7" height="5.500" fill="#1010d8"/><rect x="1" y="19" width="12" height="2.500" fill="#c8c8c8"/><path d="M17 4 L9 12 H14 L6 19" fill="none" stroke="#f4e11a" stroke-width="1.800"/></svg></div>
<div class="abs" style="left:765px;top:736px;width:24px;height:24px"><svg width="24" height="24" viewBox="0 0 24 24"><path d="M12 1.500 A10.500 10.500 0 0 0 2.900 17.200 L1.500 22.500 L6.800 21.100 A10.500 10.500 0 1 0 12 1.500z" fill="none" stroke="#2fd25b" stroke-width="2"/><path d="M8.300 6.800 C8.800 6.300 9.400 6.500 9.600 7 L10.500 9.100 C10.600 9.500 10.200 10 9.900 10.300 C10.600 11.800 11.900 13.100 13.500 13.900 C13.800 13.600 14.300 13 14.800 13.100 L16.900 14.100 C17.300 14.300 17.400 14.800 17.100 15.200 C16 16.600 14.400 16.600 12.700 15.800 A10 10 0 0 1 7.600 11.200 C6.900 9.500 7.100 7.900 8.300 6.800z" fill="#2fd25b"/></svg></div>
<div class="abs" style="left:811px;top:736px;width:24px;height:24px"><svg width="24" height="24" viewBox="0 0 24 24"><path d="M17 1 L22.500 3.500 V20.500 L17 23 L6.500 13.500 L3 16.500 L1 15.500 V8.500 L3 7.500 L6.500 10.500z M17 7 L10 12 L17 17z" fill="#1f9cf0" fill-rule="evenodd"/><path d="M17 1 L22.500 3.500 V20.500 L17 23z" fill="#0065a9"/></svg></div>
<div class="abs" style="left:857px;top:736px;width:24px;height:24px"><svg width="24" height="24" viewBox="0 0 24 24"><rect x="1" y="1" width="22" height="22" rx="3" fill="#fb7a24"/><path d="M6.500 5 C8.200 5 9.300 6.300 10 7.500 H14 C14.700 6.300 15.800 5 17.500 5 C19.300 5 20.300 6.400 20.300 7.800 C20.300 9.100 19.400 10.300 18.300 11.500 C19.400 12.700 20.300 13.900 20.300 15.200 C20.300 16.600 19.300 18 17.500 18 C15.800 18 14.700 16.700 14 15.500 H10 C9.300 16.700 8.200 18 6.500 18 C4.700 18 3.700 16.600 3.700 15.200 C3.700 13.900 4.600 12.700 5.700 11.500 C4.600 10.300 3.700 9.100 3.700 7.800 C3.700 6.400 4.700 5 6.500 5z" fill="none" stroke="#fff" stroke-width="2.200"/></svg></div>
<div class="abs" style="left:903px;top:736px;width:24px;height:24px"><svg width="24" height="24" viewBox="0 0 24 24"><path d="M1.780 6.100 A11.800 11.800 0 0 1 22.220 6.100 L12 6 L12 12 L6.800 15 Z" fill="#e33b2e"/><path d="M22.220 6.100 A11.800 11.800 0 0 1 12 23.800 L17.200 15 L12 12 L12 6 Z" fill="#fcc52d"/><path d="M12 23.800 A11.800 11.800 0 0 1 1.780 6.100 L6.800 15 L12 12 L17.200 15 Z" fill="#21993f"/><circle cx="12" cy="12" r="6" fill="#fff"/><circle cx="12" cy="12" r="4.800" fill="#3b7be8"/></svg></div>
<div class="abs" style="left:621px;top:766px;width:37px;height:2px;background:#76b9ed"></div>
<div class="abs" style="left:759px;top:766px;width:37px;height:2px;background:#76b9ed"></div>
<div class="abs" style="left:805px;top:766px;width:37px;height:2px;background:#76b9ed"></div>
<div class="abs" style="left:851px;top:766px;width:37px;height:2px;background:#76b9ed"></div>
<div class="abs" style="left:893px;top:766px;width:45px;height:2px;background:#76b9ed"></div>
<svg class="abs" style="left:962px;top:735px" width="26" height="24" viewBox="0 0 26 24"><defs><mask id="mm"><rect width="26" height="24" fill="#fff"/><circle cx="9.500" cy="8" r="8.500" fill="#000"/></mask></defs><circle cx="14" cy="13" r="10" fill="#f6a21e" mask="url(#mm)"/><path d="M2.500 11 A2.800 2.800 0 0 1 3.500 5.800 A4 4 0 0 1 11 5 A3 3 0 0 1 12.500 11z" fill="#9cbce9"/></svg>
<div class="abs tray" style="left:996px;top:740px;font-size:13.5px">19°C</div>
<svg class="abs" style="left:1050px;top:743px" width="13" height="8" viewBox="0 0 13 8"><path d="M1 7 L6.500 1.500 L12 7" fill="none" stroke="#fff" stroke-width="1.200"/></svg>
<svg class="abs" style="left:1074px;top:740px" width="14" height="16" viewBox="0 0 14 16"><path d="M3 1 H11 M3 15 H11" fill="none" stroke="#fff" stroke-width="1.100"/><rect x="1.500" y="4.500" width="8" height="7" rx="1.500" fill="none" stroke="#fff" stroke-width="1.100"/><path d="M9.500 7 L12.500 5 V11 L9.500 9" fill="none" stroke="#fff" stroke-width="1.100"/></svg>
<svg class="abs" style="left:1096px;top:739px" width="18" height="18" viewBox="0 0 18 18"><path d="M2 3.500 H15.500 V14 H2z" fill="none" stroke="#fff" stroke-width="1.100"/><path d="M5 11 C5 8 7 6.500 10 6.500 M8.500 5 L10.500 6.500 L8.500 8 M12 8 C12 10 10.500 11.500 8 11.500" fill="none" stroke="#fff" stroke-width="1.100"/><circle cx="14" cy="15" r="3" fill="#e81123"/></svg>
<svg class="abs" style="left:1122px;top:739px" width="12" height="18" viewBox="0 0 12 18"><rect x="3.500" y="1" width="5" height="10" rx="2.500" fill="none" stroke="#fff" stroke-width="1.100"/><path d="M1 8.500 A5 5 0 0 0 11 8.500 M6 13.500 V16.500 M3 16.500 H9" fill="none" stroke="#fff" stroke-width="1.100"/></svg>
<svg class="abs" style="left:1144px;top:741px" width="18" height="14" viewBox="0 0 18 14"><rect x="6" y="3.500" width="10" height="7" fill="none" stroke="#fff" stroke-width="1.100"/><path d="M16.500 5.500 V8.500" fill="none" stroke="#fff" stroke-width="1.100"/><path d="M1 7 H4 M2 4.500 V5.500 M2 8.500 V9.500" fill="none" stroke="#fff" stroke-width="1.100"/><rect x="8" y="5" width="5" height="4" fill="#fff"/></svg>
<svg class="abs" style="left:1169px;top:740px" width="17" height="16" viewBox="0 0 17 16"><rect x="1.500" y="1.500" width="7" height="6" fill="none" stroke="#fff" stroke-width="1.100"/><rect x="5.500" y="4.500" width="11" height="8" fill="none" stroke="#fff" stroke-width="1.100"/><path d="M11 12.500 V15 M8 15 H14" fill="none" stroke="#fff" stroke-width="1.100"/></svg>
<svg class="abs" style="left:1192px;top:740px" width="18" height="16" viewBox="0 0 18 16"><path d="M1.500 5.500 H4.500 L8.500 1.500 V14.500 L4.500 10.500 H1.500z" fill="none" stroke="#fff" stroke-width="1.100"/><path d="M11 5 A4 4 0 0 1 11 11 M13.500 3 A6.500 6.500 0 0 1 13.500 13" fill="none" stroke="#fff" stroke-width="1.100"/></svg>
<div class="abs tray" style="left:1219px;top:741px;font-size:12px">ENG</div>
<div class="abs tray" style="left:1259px;top:731px;font-size:12px">2:08 AM</div>
<div class="abs tray" style="left:1252px;top:749px;font-size:12px">10/13/2025</div>
<svg class="abs" style="left:1323px;top:738px" width="28" height="26" viewBox="0 0 28 26"><path d="M1 1 H17 V13 H7 L4 16 V13 H1z" fill="#fff"/><path d="M4 4.500 H14 M4 7 H14 M4 9.500 H11" stroke="#333" stroke-width="1"/><circle cx="17.500" cy="16.500" r="7.500" fill="#2d2d2d" stroke="#888" stroke-width="1"/><text x="17.500" y="21" text-anchor="middle" font-family="Liberation Sans" font-size="12" fill="#fff">2</text></svg>
<div class="abs" style="left:1361px;top:728px;width:1px;height:40px;background:#858880"></div>

</body></html>
